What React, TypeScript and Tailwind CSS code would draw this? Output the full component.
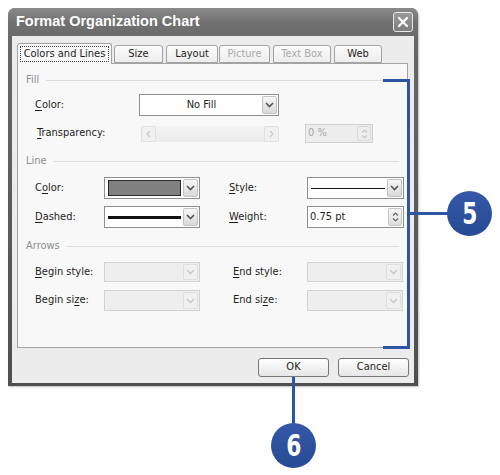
import React from "react";

const BLUE = "bg-[#2b56a6]";

function Chevron({ dim }: { dim?: boolean }) {
  return (
    <svg width="9" height="6" viewBox="0 0 9 6">
      <path
        d="M1 1l3.5 3.5L8 1"
        fill="none"
        stroke={dim ? "#cbcbcb" : "#555"}
        strokeWidth="1.6"
      />
    </svg>
  );
}

function ArrowBtn({ dim }: { dim?: boolean }) {
  return (
    <div
      className={`w-[15px] flex items-center justify-center rounded-[2px] border ${
        dim
          ? "border-[#dedede] bg-[#f0f0f0]"
          : "border-[#c2c2c2] bg-gradient-to-b from-[#f6f6f6] to-[#d9d9d9]"
      }`}
    >
      <Chevron dim={dim} />
    </div>
  );
}

function Spin({ dim }: { dim?: boolean }) {
  const c = dim ? "#c6c6c6" : "#666";
  return (
    <div
      className={`w-[14px] flex flex-col items-center justify-center gap-[2px] rounded-[2px] border ${
        dim ? "border-[#dadada] bg-[#eeeeee]" : "border-[#c6c6c6] bg-gradient-to-b from-[#f7f7f7] to-[#dedede]"
      }`}
    >
      <svg width="7" height="4" viewBox="0 0 7 4">
        <path d="M1 3.5L3.5 1L6 3.5" fill="none" stroke={c} strokeWidth="1.2" />
      </svg>
      <svg width="7" height="4" viewBox="0 0 7 4">
        <path d="M1 0.5L3.5 3L6 0.5" fill="none" stroke={c} strokeWidth="1.2" />
      </svg>
    </div>
  );
}

function Dropdown({
  className,
  disabled,
  children,
}: {
  className: string;
  disabled?: boolean;
  children?: React.ReactNode;
}) {
  return (
    <div
      className={`flex items-stretch p-[1px] border ${
        disabled ? "border-[#d2d2d2] bg-[#eeeeee]" : "border-[#8f8f8f] bg-white"
      } ${className}`}
    >
      <div className="flex-1 flex items-center min-w-0">{children}</div>
      <ArrowBtn dim={disabled} />
    </div>
  );
}

function Section({ title }: { title: string }) {
  return (
    <div className="flex items-center h-[14px] pl-[8px] pr-[8px] gap-[7px]">
      <span className="text-[#8e8e8e]">{title}</span>
      <div className="flex-1 h-px bg-[#dadada]" />
    </div>
  );
}

function Label({ className, children }: { className: string; children: React.ReactNode }) {
  return <div className={`shrink-0 text-[#1e1e1e] ${className}`}>{children}</div>;
}

function U({ children }: { children: React.ReactNode }) {
  return <span className="underline underline-offset-2">{children}</span>;
}

function Tab({
  className,
  active,
  disabled,
  children,
}: {
  className: string;
  active?: boolean;
  disabled?: boolean;
  children: React.ReactNode;
}) {
  return (
    <div
      className={`shrink-0 flex items-center justify-center rounded-t-[3px] border border-[#a3a3a3] ${
        active
          ? "h-[21px] border-b-0 bg-[#f8f8f8] relative z-10 -mb-px"
          : "h-[18px] bg-gradient-to-b from-[#fbfbfb] to-[#ededed]"
      } ${disabled ? "text-[#a9a9a9]" : "text-[#1e1e1e]"} ${className}`}
    >
      {active ? (
        <span className="border border-dotted border-[#444] px-[3px] leading-[14px]">{children}</span>
      ) : (
        children
      )}
    </div>
  );
}

function Button({ children }: { children: React.ReactNode }) {
  return (
    <div className="w-[71px] h-[19px] flex items-center justify-center rounded-[3px] border border-[#767676] bg-gradient-to-b from-[#ffffff] to-[#e6e6e6] text-[#1e1e1e]">
      {children}
    </div>
  );
}

function Badge({ n, className }: { n: string; className: string }) {
  return (
    <div
      className={`absolute w-[45px] h-[45px] rounded-full bg-gradient-to-b from-[#3459a9] to-[#274a93] flex items-center justify-center ${className}`}
    >
      <span className="text-white font-bold text-[31px] leading-none scale-x-[0.78] font-['DejaVu_Sans_Condensed',sans-serif]">
        {n}
      </span>
    </div>
  );
}

export default function App() {
  return (
    <div className="relative w-[500px] h-[475px] bg-white overflow-hidden pt-[8px] pl-[8px] font-['DejaVu_Sans_Condensed','Liberation_Sans',sans-serif] text-[11px]">
      {/* dialog window */}
      <div className="w-[410px] h-[378px] flex flex-col rounded-t-[7px] bg-gradient-to-b from-[#6a6a6a] to-[#4f4f4f] shadow-[1px_1px_2px_rgba(0,0,0,0.25)]">
        <div className="h-[28px] shrink-0 flex items-center pl-[8px] pr-[5px] rounded-t-[7px] bg-gradient-to-b from-[#8a8a8a] via-[#717171] to-[#6b6b6b]">
          <span className="flex-1 text-white font-bold text-[14.5px] font-['Liberation_Sans',sans-serif]">
            Format Organization Chart
          </span>
          <div className="w-[20px] h-[20px] rounded-[3px] border border-[#e8e8e8] bg-gradient-to-b from-[#9a9a9a] to-[#7c7c7c] flex items-center justify-center">
            <svg width="12" height="12" viewBox="0 0 12 12">
              <path d="M2 2l8 8M10 2l-8 8" stroke="white" strokeWidth="2.2" strokeLinecap="round" />
            </svg>
          </div>
        </div>

        <div className="flex-1 mx-[4px] mb-[3px] bg-[#ececec] flex flex-col pt-[7px] pl-[5px] pr-[6px]">
          {/* tabs */}
          <div className="flex items-end h-[20px]">
            <Tab className="w-[95px]" active>
              Colors and Lines
            </Tab>
            <Tab className="w-[49px] ml-[2px]">Size</Tab>
            <Tab className="w-[52px] ml-[3px]">Layout</Tab>
            <Tab className="w-[51px] ml-[1px]" disabled>
              Picture
            </Tab>
            <Tab className="w-[58px] ml-[3px]" disabled>
              Text Box
            </Tab>
            <Tab className="w-[48px] ml-[3px]">Web</Tab>
          </div>

          {/* panel */}
          <div className="h-[285px] border border-[#a3a3a3] bg-[#f8f8f8] flex flex-col pt-[9px]">
            <Section title="Fill" />
            <div className="flex items-center h-[22px] mt-[7px] pl-[17px]">
              <Label className="w-[104px]">
                <U>C</U>olor:
              </Label>
              <Dropdown className="w-[140px] h-[22px]">
                <span className="flex-1 text-center text-[#1e1e1e]">No Fill</span>
              </Dropdown>
            </div>
            <div className="flex items-center h-[19px] mt-[8px] pl-[19px]">
              <Label className="w-[104px]">
                <U>T</U>ransparency:
              </Label>
              <div className="w-[138px] h-[16px] flex justify-between items-stretch bg-gradient-to-b from-[#f4f4f4] to-[#ececec]">
                <div className="w-[15px] flex items-center justify-center rounded-[2px] border border-[#e0e0e0] bg-[#f1f1f1]">
                  <svg width="5" height="8" viewBox="0 0 5 8">
                    <path d="M4 1L1 4l3 3" fill="none" stroke="#c8c8c8" strokeWidth="1.3" />
                  </svg>
                </div>
                <div className="w-[15px] flex items-center justify-center rounded-[2px] border border-[#e0e0e0] bg-[#f1f1f1]">
                  <svg width="5" height="8" viewBox="0 0 5 8">
                    <path d="M1 1l3 3-3 3" fill="none" stroke="#c8c8c8" strokeWidth="1.3" />
                  </svg>
                </div>
              </div>
              <div className="ml-[26px] w-[68px] h-[19px] flex items-stretch p-[1px] border border-[#cfcfcf] bg-[#ededed]">
                <span className="flex-1 flex items-center pl-[1px] text-[#a8a8a8]">0 %</span>
                <Spin dim />
              </div>
            </div>

            <div className="mt-[11px]">
              <Section title="Line" />
            </div>
            <div className="flex items-center h-[22px] mt-[9px] pl-[17px]">
              <Label className="w-[69px]">
                C<U>o</U>lor:
              </Label>
              <Dropdown className="w-[96px] h-[22px]">
                <div className="flex-1 mx-[2px] h-[16px] border border-[#2a2a2a] bg-[#808080]" />
              </Dropdown>
              <Label className="w-[78px] ml-[29px]">
                <U>S</U>tyle:
              </Label>
              <Dropdown className="w-[97px] h-[22px]">
                <div className="flex-1 mx-[2px] h-px bg-[#111]" />
              </Dropdown>
            </div>
            <div className="flex items-center h-[22px] mt-[7px] pl-[17px]">
              <Label className="w-[69px]">
                <U>D</U>ashed:
              </Label>
              <Dropdown className="w-[96px] h-[22px]">
                <div className="flex-1 mx-[2px] h-[3px] bg-[#111]" />
              </Dropdown>
              <Label className="w-[78px] ml-[29px]">
                <U>W</U>eight:
              </Label>
              <div className="w-[97px] h-[22px] flex items-stretch p-[1px] border border-[#8f8f8f] bg-white">
                <span className="flex-1 flex items-center pl-[1px] text-[#1e1e1e]">0.75 pt</span>
                <Spin />
              </div>
            </div>

            <div className="mt-[11px]">
              <Section title="Arrows" />
            </div>
            <div className="flex items-center h-[20px] mt-[9px] pl-[17px]">
              <Label className="w-[69px]">
                <U>B</U>egin style:
              </Label>
              <Dropdown className="w-[96px] h-[20px]" disabled />
              <Label className="w-[74px] ml-[33px]">
                <U>E</U>nd style:
              </Label>
              <Dropdown className="w-[96px] h-[20px]" disabled />
            </div>
            <div className="flex items-center h-[21px] mt-[8px] pl-[17px]">
              <Label className="w-[69px]">
                Begin si<U>z</U>e:
              </Label>
              <Dropdown className="w-[96px] h-[21px]" disabled />
              <Label className="w-[74px] ml-[33px]">
                End si<U>z</U>e:
              </Label>
              <Dropdown className="w-[96px] h-[21px]" disabled />
            </div>
          </div>

          {/* buttons */}
          <div className="flex justify-end gap-[9px] mt-[10px] -mr-px">
            <Button>OK</Button>
            <Button>Cancel</Button>
          </div>
        </div>
      </div>

      {/* callouts */}
      <div className="absolute left-[383px] top-[79px] w-[27px] h-[270px] border-[3px] border-l-0 border-[#2b56a6]" />
      <div className={`absolute left-[410px] top-[212px] w-[40px] h-[3px] ${BLUE}`} />
      <Badge n="5" className="left-[447px] top-[191px]" />
      <div className={`absolute left-[292px] top-[377px] w-[3px] h-[47px] ${BLUE}`} />
      <Badge n="6" className="left-[271px] top-[423px]" />
    </div>
  );
}
